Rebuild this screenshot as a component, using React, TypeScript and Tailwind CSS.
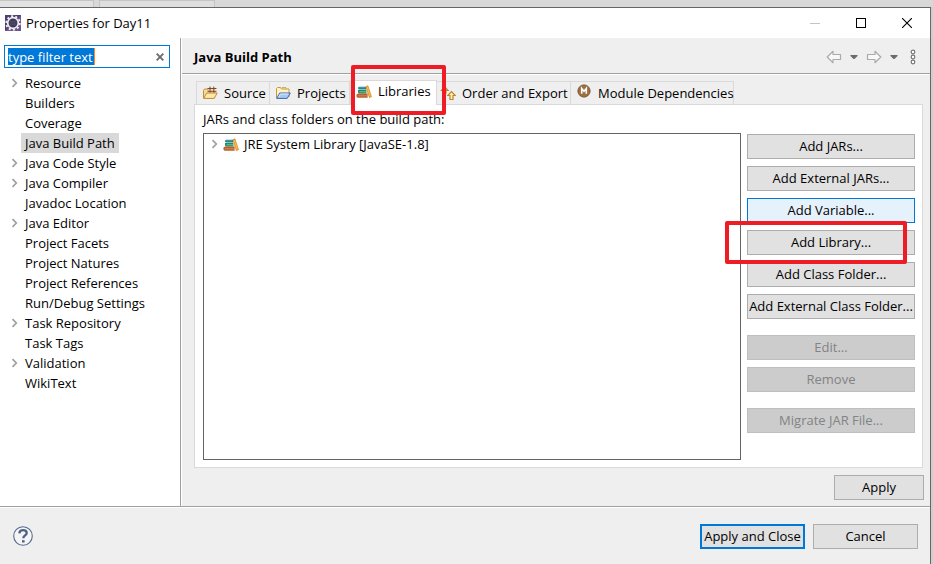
import React, { useState } from 'react';
import clsx from 'clsx';

const treeItems = [
  { label: 'Resource', expandable: true },
  { label: 'Builders' },
  { label: 'Coverage' },
  { label: 'Java Build Path' },
  { label: 'Java Code Style', expandable: true },
  { label: 'Java Compiler', expandable: true },
  { label: 'Javadoc Location' },
  { label: 'Java Editor', expandable: true },
  { label: 'Project Facets' },
  { label: 'Project Natures' },
  { label: 'Project References' },
  { label: 'Run/Debug Settings' },
  { label: 'Task Repository', expandable: true },
  { label: 'Task Tags' },
  { label: 'Validation', expandable: true },
  { label: 'WikiText' },
];

const Chevron = () => (
  <svg className="w-2 h-3 shrink-0" viewBox="0 0 8 12" fill="none" stroke="#a0a0a0" strokeWidth="1.7">
    <path d="M1.5 2.2 5.3 6 1.5 9.8" />
  </svg>
);

const EclipseIcon = () => (
  <svg className="w-4 h-4 shrink-0" viewBox="0 0 16 16">
    <rect width="16" height="16" fill="#4d3f70" />
    <path d="M0 16 16 0v16z" fill="#6b558f" />
    <circle cx="8" cy="8" r="6.8" fill="none" stroke="#efedf2" strokeWidth="1.8" strokeDasharray="2.14 2.13" />
    <circle cx="8" cy="8" r="5.3" fill="#3b3650" stroke="#f2f0f4" strokeWidth="1.7" />
    <path d="M4.6 6.2h6.8M4.2 8h7.6M4.6 9.8h6.8" stroke="#5c5773" strokeWidth=".8" />
  </svg>
);

const BooksIcon = () => (
  <svg className="w-4 h-4 shrink-0" viewBox="0 -1.5 16 16">
    <path d="M1.6 3.4 3 2.2h7v2.4H2.6z" fill="#1f7d94" />
    <path d="M3 3.2h6" stroke="#4fa6b4" strokeWidth=".8" />
    <path d="M2 5.4 3.4 5h7v4H3L2 8z" fill="#1f8a63" />
    <path d="M3.4 7.3h6.6" stroke="#8fcdb0" strokeWidth=".8" />
    <path d="M.5 10 2 9h9.6v4.2H1.6L.5 12.2z" fill="#b5602f" />
    <path d="M1.8 11.3h9.4" stroke="#dd9468" strokeWidth=".8" />
    <path d="m9.9 2.2 2-1 3.6 11-2.1 1z" fill="#f0a22c" stroke="#c98220" strokeWidth=".6" />
    <path d="m11.3 2.8 2.9 9" stroke="#ffc862" strokeWidth=".7" />
  </svg>
);

const SourceIcon = () => (
  <svg className="w-4 h-4 shrink-0" viewBox="0 0 16 16">
    <path d="M1.5 13V5.5l1-1.5h3l1 1.5h6V13z" fill="#f7dc98" stroke="#c08a3c" />
    <path d="M6.5 2.5h7v5h-7z" fill="#f3dcc0" />
    <path d="M5.5 3.5h9M5.5 6.3h9M8 1.6v6.2M11.8 1.6v6.2" stroke="#7b4a2e" />
    <path d="M1.7 13.4 4.6 8h10.6l-3 5.4z" fill="#ffe7a6" stroke="#c08a3c" strokeLinejoin="round" />
  </svg>
);

const ProjectsIcon = () => (
  <svg className="w-4 h-4 shrink-0" viewBox="0 0 16 16">
    <path d="M1.5 13V3.5l1-1h3l1 1.5h7.5v8" fill="#fff3c4" stroke="#c5983e" />
    <path d="M7 3.5v-1h4v1.5" fill="none" stroke="#d2ae60" />
    <path d="M1.7 13.4 4.7 8h10.6l-3.1 5.4z" fill="#a9c8f3" stroke="#3c67b5" strokeLinejoin="round" />
    <path d="m3.8 12 1.6-3h8" fill="none" stroke="#dceafb" />
  </svg>
);

const OrderIcon = () => (
  <svg className="w-4 h-4 shrink-0" viewBox="0 0 16 16" fill="#fff3b8" stroke="#bc8727" strokeWidth="1.2">
    <path d="M3.5 8.5V5.3H1.4l3.3-3.7L8 5.3H5.9v3.2z" />
    <path d="M10 14.5v-4H7.8l3.7-3.9 3.7 3.9H13v4z" />
  </svg>
);

const ModuleIcon = () => (
  <svg className="w-4 h-4 shrink-0 mb-1" viewBox="0 0 16 16">
    <circle cx="8" cy="8" r="6.1" fill="#9d6f42" stroke="#7d5634" />
    <path d="M5.7 10.8V5.5L8 8.2l2.3-2.7v5.3" fill="none" stroke="#fff" strokeWidth="1.6" />
  </svg>
);

const HelpIcon = () => (
  <svg className="w-5 h-5" viewBox="0 0 20 20">
    <circle cx="10" cy="10" r="9.3" fill="#f5f5f5" stroke="#566b8e" strokeWidth="1.1" />
    <path d="M6.3 7.4c.2-2.2 1.7-3.2 3.8-3.2 2.1 0 3.6 1.1 3.6 2.8 0 2.4-3.4 2.4-3.4 5.3" fill="none" stroke="#4d6288" strokeWidth="2.3" />
    <path d="M9 14.2h2.6v2.3H9z" fill="#4d6288" />
  </svg>
);

const HistoryArrow = ({ flip = false }: { flip?: boolean }) => (
  <svg className={clsx('w-4 h-4', flip && '-scale-x-100')} viewBox="0 0 16 16" fill="#f8f8f8" stroke="#ababab" strokeWidth="1.2">
    <path d="M1.2 8 7 2.3V5.5h7.5v5H7v3.2z" strokeLinejoin="round" />
  </svg>
);

const Caret = () => (
  <svg className="w-2 h-4" viewBox="0 0 8 16" fill="#6b6b6b">
    <path d="M.5 6h7v1L4.5 10h-1L.5 7z" />
  </svg>
);

const tabs = [
  { label: 'Source', icon: SourceIcon, style: 'w-[74px] pl-[5px] gap-[6px]' },
  { label: 'Projects', icon: ProjectsIcon, style: 'w-[80px] pl-[5px] gap-[6px]' },
  { label: 'Libraries', icon: BooksIcon, style: 'w-[87px] pl-[5px] gap-[6px]' },
  { label: 'Order and Export', icon: OrderIcon, style: 'w-[134px] pl-[3px] gap-[6px]' },
  { label: 'Module Dependencies', icon: ModuleIcon, style: 'w-[163px] pl-[5px] gap-[6px]' },
];

const actionGroups = [
  ['Add JARs...', 'Add External JARs...', 'Add Variable...', 'Add Library...', 'Add Class Folder...', 'Add External Class Folder...'],
  ['Edit...', 'Remove'],
  ['Migrate JAR File...'],
];

const Highlight = ({ className }: { className: string }) => (
  <span className={clsx('absolute z-10 border-4 border-[#ee1c25] rounded-xs pointer-events-none', className)} />
);

const buttonBase = 'h-[25px] border whitespace-nowrap text-center leading-[21px]';

export default function App() {
  const [selected, setSelected] = useState('Java Build Path');
  const [activeTab, setActiveTab] = useState('Libraries');
  const [filter, setFilter] = useState('');

  return (
    <div className="min-h-screen flex flex-col bg-[#cfcfcf] text-black text-[13px] leading-5 font-['Open_Sans','Noto_Sans',sans-serif]">
      {/* strip of the window behind */}
      <div className="h-[7px] flex bg-[#d8d8d8]">
        <div className="w-[94px] border-r border-t border-[#c4c4c4] bg-[#e2e2e2]" />
        <div className="w-[5px]" />
        <div className="w-[116px] border-x border-t border-[#c4c4c4] bg-[#dedede]" />
      </div>

      <div className="flex-1 flex flex-col mr-[2px] border-t border-r border-[#666] bg-[#efefef]">
        <header className="h-[30px] flex items-center bg-white pl-[5px]">
          <EclipseIcon />
          <h1 className="ml-[5px] flex-1">Properties for Day11</h1>
          <button aria-label="Minimize" className="w-[46px] h-full flex items-center justify-center">
            <span className="w-[10px] h-px bg-[#c4c4c4]" />
          </button>
          <button aria-label="Maximize" className="w-[46px] h-full flex items-center justify-center">
            <span className="w-[10px] h-[10px] border border-black" />
          </button>
          <button aria-label="Close" className="w-[46px] h-full flex items-center justify-center">
            <svg className="w-[10px] h-[10px]" viewBox="0 0 10 10" stroke="#000" strokeWidth="1.1">
              <path d="m0 0 10 10M10 0 0 10" />
            </svg>
          </button>
        </header>

        <div className="flex-1 flex">
          <aside className="w-[181px] shrink-0 bg-white border-r border-[#a0a0a0] pt-[7px]">
            <div className="h-[23px] ml-1 mr-[10px] flex items-center border border-[#0078d7] pl-[3px] pr-[5px]">
              <input
                type="text"
                aria-label="Filter properties"
                placeholder="type filter text"
                value={filter}
                onChange={(e) => setFilter(e.target.value)}
                className="w-[87px] h-[17px] bg-[#0078d7] border-r border-[#ff8728] text-white placeholder:text-white outline-none"
              />
              <button aria-label="Clear filter" onClick={() => setFilter('')} className="ml-auto">
                <svg className="w-2 h-2" viewBox="0 0 8 8" stroke="#6d6d6d" strokeWidth="1.9">
                  <path d="m.7.7 6.6 6.6M7.3.7.7 7.3" />
                </svg>
              </button>
            </div>
            <ul className="mt-[5px]">
              {treeItems.map((item) => (
                <li key={item.label} className="h-5 flex items-center pl-[11px]">
                  <span className="w-[10px] flex">{item.expandable && <Chevron />}</span>
                  <button
                    onClick={() => setSelected(item.label)}
                    className={clsx('h-5 px-1 leading-5 whitespace-nowrap', selected === item.label && 'bg-[#d9d9d9]')}
                  >
                    {item.label}
                  </button>
                </li>
              ))}
            </ul>
          </aside>

          <main className="flex-1 min-w-0 flex flex-col border-l border-white">
            <div className="h-9 flex items-center border-b border-[#a0a0a0] pl-3 pr-[14px] pt-[2px]">
              <h2 className="flex-1 font-bold">Java Build Path</h2>
              <div className="flex items-center gap-2">
                <button aria-label="Back"><HistoryArrow /></button>
                <button aria-label="Back history"><Caret /></button>
                <button aria-label="Forward"><HistoryArrow flip /></button>
                <button aria-label="Forward history"><Caret /></button>
                <button aria-label="View menu" className="ml-1">
                  <svg className="w-[6px] h-4" viewBox="0 0 6 16" fill="#fff" stroke="#777" strokeWidth="1.2">
                    <circle cx="3" cy="3" r="1.8" />
                    <circle cx="3" cy="8" r="1.8" />
                    <circle cx="3" cy="13" r="1.8" />
                  </svg>
                </button>
              </div>
            </div>

            <div className="flex-1 flex flex-col border-t border-white pl-3 pr-[6px] pt-[5px] pb-[6px]">
              <div role="tablist" className="flex items-end pl-[2px]">
                {tabs.map(({ label, icon: Icon, style }, i) => {
                  const active = activeTab === label;
                  return (
                    <button
                      key={label}
                      role="tab"
                      aria-selected={active}
                      onClick={() => setActiveTab(label)}
                      className={clsx(
                        'relative flex items-center border-t border-r border-[#d9d9d9] whitespace-nowrap',
                        style,
                        (active || i === 0) && 'border-l',
                        active ? 'h-[25px] -mb-px bg-white pb-1' : 'h-[23px] bg-[#efefef]'
                      )}
                    >
                      <Icon />
                      {label}
                      {label === 'Libraries' && <Highlight className="left-0 -right-[10px] -top-4 -bottom-[10px]" />}
                    </button>
                  );
                })}
              </div>

              <section className="flex-1 flex flex-col mr-px bg-white border border-[#d9d9d9] pl-2 pr-[7px] pt-1 pb-[7px]">
                <p className="h-6">JARs and class folders on the build path:</p>
                <div className="flex-1 flex gap-[6px]">
                  <ul className="flex-1 border border-[#646464] pl-[7px]">
                    <li className="h-5 flex items-center">
                      <Chevron />
                      <span className="ml-1"><BooksIcon /></span>
                      <span className="ml-[5px]">JRE System Library [JavaSE-1.8]</span>
                    </li>
                  </ul>
                  <div className="w-[168px] flex flex-col gap-4 pt-px">
                    {actionGroups.map((group, i) => (
                      <div key={i} className="flex flex-col gap-[7px]">
                        {group.map((label) => (
                          <button
                            key={label}
                            disabled={i > 0}
                            className={clsx(
                              buttonBase,
                              'relative',
                              i > 0
                                ? 'bg-[#cccccc] border-[#bfbfbf] text-[#838383]'
                                : label === 'Add Variable...'
                                  ? 'bg-[#e5f1fb] border-[#0078d7]'
                                  : 'bg-[#e1e1e1] border-[#adadad]'
                            )}
                          >
                            {label}
                            {label === 'Add Library...' && <Highlight className="-left-[23px] right-[7px] -top-[10px] -bottom-[10px]" />}
                          </button>
                        ))}
                      </div>
                    ))}
                  </div>
                </div>
              </section>

              <button className={clsx(buttonBase, 'mt-[7px] w-[90px] self-end bg-[#e1e1e1] border-[#adadad]')}>Apply</button>
            </div>
          </main>
        </div>

        <footer className="h-[58px] flex items-center gap-2 border-t border-[#a0a0a0] shadow-[inset_0_1px_0_#fff] pl-[13px] pr-3 pt-px">
          <button aria-label="Help" className="mr-auto"><HelpIcon /></button>
          <button className="h-[25px] w-[105px] border-2 border-[#0078d7] bg-[#e1e1e1] whitespace-nowrap leading-[21px]">Apply and Close</button>
          <button className={clsx(buttonBase, 'w-[105px] bg-[#e1e1e1] border-[#adadad]')}>Cancel</button>
        </footer>
      </div>
    </div>
  );
}
